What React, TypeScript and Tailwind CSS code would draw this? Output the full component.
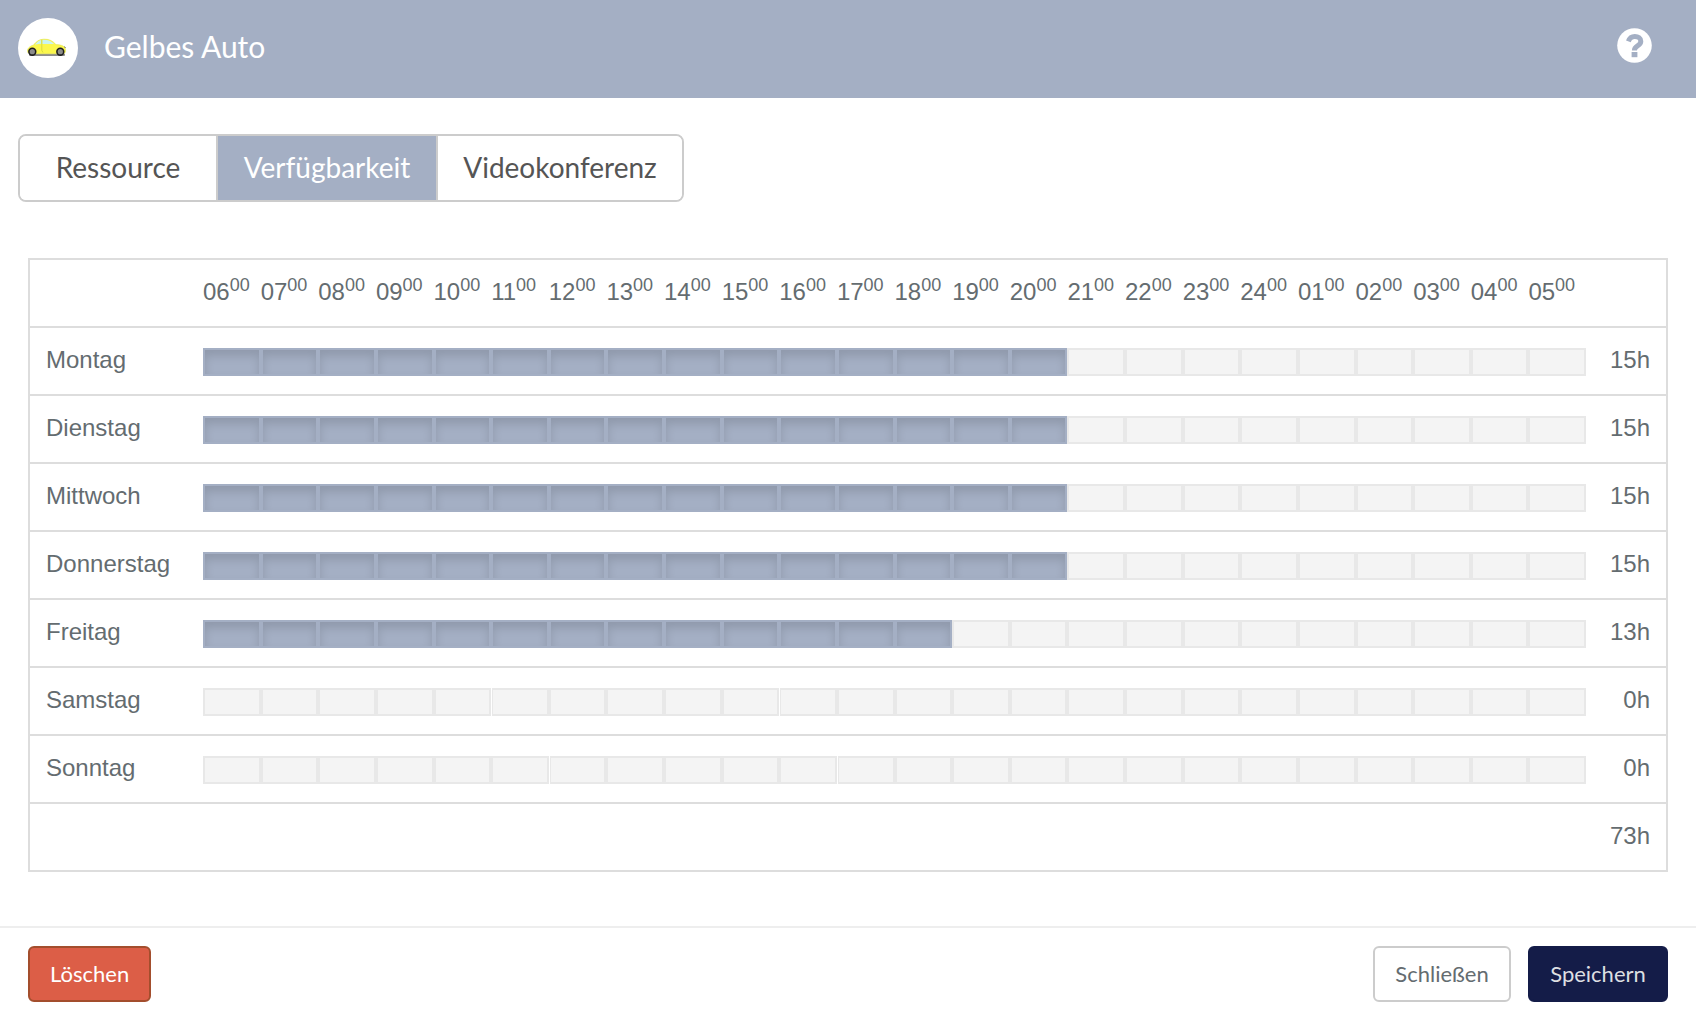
import { useState } from 'react';

const START_HOUR = 6;
const SLOTS = 24;

const TABS = [
  { id: 'resource', label: 'Ressource', width: 'w-[198px] border-r-2' },
  { id: 'availability', label: 'Verfügbarkeit', width: 'w-[220px] border-r-2' },
  { id: 'video', label: 'Videokonferenz', width: 'w-[244px]' },
];

// seams: slots that are set off from the one before by a hairline
const DAYS = [
  { name: 'Montag', hours: 15, seams: [] as number[] },
  { name: 'Dienstag', hours: 15, seams: [] },
  { name: 'Mittwoch', hours: 15, seams: [] },
  { name: 'Donnerstag', hours: 15, seams: [] },
  { name: 'Freitag', hours: 13, seams: [] },
  { name: 'Samstag', hours: 0, seams: [5, 10] },
  { name: 'Sonntag', hours: 0, seams: [6, 11] },
];

// The day starts at 06 and wraps after 24 to 01
const HOURS = Array.from({ length: SLOTS }, (_, i) => {
  const hour = START_HOUR + i;
  return String(hour > 24 ? hour - 24 : hour).padStart(2, '0');
});

function CarIcon() {
  return (
    <svg viewBox="0 0 42 20" className="h-5 w-[42px]" aria-hidden="true">
      <rect x="2" y="15.5" width="36" height="2.6" rx="1" fill="#8d8d8d" />
      <path
        d="M0.600 13.500C0 11 2 8.500 6.500 7C9 4 12 1.200 17 1.100C22 1 25.500 2.800 29 6.600C33.500 6.600 37 7.800 38 10C39 12.500 38.800 14.500 37.500 15.200L30 15.800H9L2 15.300C1 15 0.800 14.500 0.600 13.500Z"
        fill="#fbf74c"
        stroke="#dfe04e"
        strokeWidth="0.5"
      />
      <path d="M7.800 6.600C10 4 12 2.300 14.300 1.900V5.800Z" fill="#c9f3ef" />
      <path d="M15.300 1.900C20 1.500 24 2.800 27 6H15.300Z" fill="#c9f3ef" />
      <path d="M14.800 1.800V12.500L16 14.500" stroke="#c9cf35" strokeWidth="0.7" fill="none" />
      <path d="M37 8.600L38.800 9.800" stroke="#444" strokeWidth="0.7" />
      <circle cx="5.300" cy="13.700" r="4.200" fill="#1e1e1e" />
      <circle cx="5.300" cy="13.700" r="2.600" fill="#8c8c8c" />
      <circle cx="33.300" cy="13.700" r="4.200" fill="#1e1e1e" />
      <circle cx="33.300" cy="13.700" r="2.600" fill="#8c8c8c" />
    </svg>
  );
}

function HelpIcon() {
  return (
    <svg viewBox="0 0 35 35" className="size-[35px]" aria-hidden="true">
      <circle cx="17.500" cy="17.500" r="17.300" fill="#fff" />
      {/* hook */}
      <path
        d="M11.400 13.300C12.600 10 14.500 8.500 17.800 8.500C21.300 8.500 23.800 10.300 23.800 13.200C23.800 15.600 22.400 16.700 20.500 17.900C18.300 19.300 17.400 20 17.400 22.400"
        fill="none"
        stroke="#a4afc4"
        strokeWidth="5"
      />
      <rect x="14.600" y="24" width="5.800" height="5.200" fill="#a4afc4" />
    </svg>
  );
}

export default function App() {
  const [tab, setTab] = useState('availability');
  const [slots, setSlots] = useState(() =>
    DAYS.map((day) => HOURS.map((_, i) => i < day.hours)),
  );

  const toggle = (day: number, slot: number) =>
    setSlots(slots.map((row, d) => (d === day ? row.map((on, i) => (i === slot ? !on : on)) : row)));

  const sum = (row: boolean[]) => row.filter(Boolean).length;
  const total = slots.reduce((acc, row) => acc + sum(row), 0);

  return (
    <div className="min-h-screen bg-white font-['Lato',sans-serif]">
      {/* Header */}
      <header className="flex h-[98px] items-start justify-between bg-[#a4afc4] pr-11 pl-[18px]">
        <div className="flex items-center gap-[26px] pt-[18px]">
          <div className="flex size-[60px] items-center justify-center rounded-full bg-white">
            <CarIcon />
          </div>
          <h1 className="pb-1 text-[30px] leading-9 text-white">Gelbes Auto</h1>
        </div>
        <button type="button" aria-label="Hilfe" className="mt-7">
          <HelpIcon />
        </button>
      </header>

      {/* Tabs */}
      <nav className="px-[18px] pt-9">
        <div role="tablist" className="inline-flex h-[68px] overflow-hidden rounded-lg border-2 border-[#ccc]">
          {TABS.map(({ id, label, width }) => (
            <button
              key={id}
              type="button"
              role="tab"
              aria-selected={tab === id}
              onClick={() => setTab(id)}
              className={`border-[#ccc] pb-0.5 text-[28px] leading-8 ${width} ${
                tab === id ? 'bg-[#a4afc4] text-white' : 'bg-white text-[#555]'
              }`}
            >
              {label}
            </button>
          ))}
        </div>
      </nav>

      {/* Weekly availability */}
      <main className="px-7 pt-14 pb-[54px] font-['Liberation_Sans',Arial,sans-serif] text-2xl text-[#646c70]">
        <table className="w-full table-fixed border-separate border-spacing-0 border-2 border-b-0 border-[#ddd]">
          <colgroup>
            <col className="w-[173px]" />
            <col span={SLOTS} />
            <col className="w-20" />
          </colgroup>
          <thead>
            <tr className="h-[68px]">
              <td className="border-b-2 border-[#ddd]" />
              {HOURS.map((hour) => (
                <th key={hour} scope="col" className="border-b-2 border-[#ddd] pb-0.5 text-left font-normal whitespace-nowrap">
                  {hour}
                  <sup className="text-lg leading-none">00</sup>
                </th>
              ))}
              <td className="border-b-2 border-[#ddd]" />
            </tr>
          </thead>
          <tbody>
            {DAYS.map((day, d) => (
              <tr key={day.name} className="h-[68px]">
                <th scope="row" className="border-b-2 border-[#ddd] pb-0.5 pl-4 text-left font-normal">
                  {day.name}
                </th>
                {slots[d].map((on, i) => (
                  <td
                    key={HOURS[i]}
                    className={`border-b-2 border-[#ddd] pt-0.5 ${day.seams.includes(i) ? 'pl-px' : ''}`}
                  >
                    <button
                      type="button"
                      aria-label={`${day.name} ${HOURS[i]} Uhr`}
                      aria-pressed={on}
                      onClick={() => toggle(d, i)}
                      className={`block h-7 w-full border-2 ${day.seams.includes(i) ? 'border-l' : ''} ${
                        on
                          ? 'border-[#a4afc4] bg-[#a4afc4] shadow-[inset_0_6px_10px_rgba(0,0,0,0.125)]'
                          : 'border-[#e8e8e8] bg-[#f4f4f4]'
                      }`}
                    />
                  </td>
                ))}
                <td className="border-b-2 border-[#ddd] pr-4 pb-0.5 text-right">{sum(slots[d])}h</td>
              </tr>
            ))}
          </tbody>
          <tfoot>
            <tr className="h-[68px]">
              <td colSpan={SLOTS + 2} className="border-b-2 border-[#ddd] pr-4 pb-0.5 text-right">
                {total}h
              </td>
            </tr>
          </tfoot>
        </table>
      </main>

      {/* Actions */}
      <footer className="flex items-center border-t-2 border-[#eee] px-7 pt-[18px] pb-4 text-[22px] leading-7">
        <button type="button" className="h-14 rounded-md border-2 border-[#a34e2d] bg-[#dc5e47] px-5 text-white">
          Löschen
        </button>
        <button
          type="button"
          className="ml-auto h-14 min-w-[138px] rounded-md border-2 border-[#ccc] bg-white px-5 text-[#646c70]"
        >
          Schließen
        </button>
        <button
          type="button"
          className="ml-[17px] h-14 min-w-[140px] rounded-md border-2 border-[#141c48] bg-[#141c48] px-5 text-[#dddfe2]"
        >
          Speichern
        </button>
      </footer>
    </div>
  );
}
